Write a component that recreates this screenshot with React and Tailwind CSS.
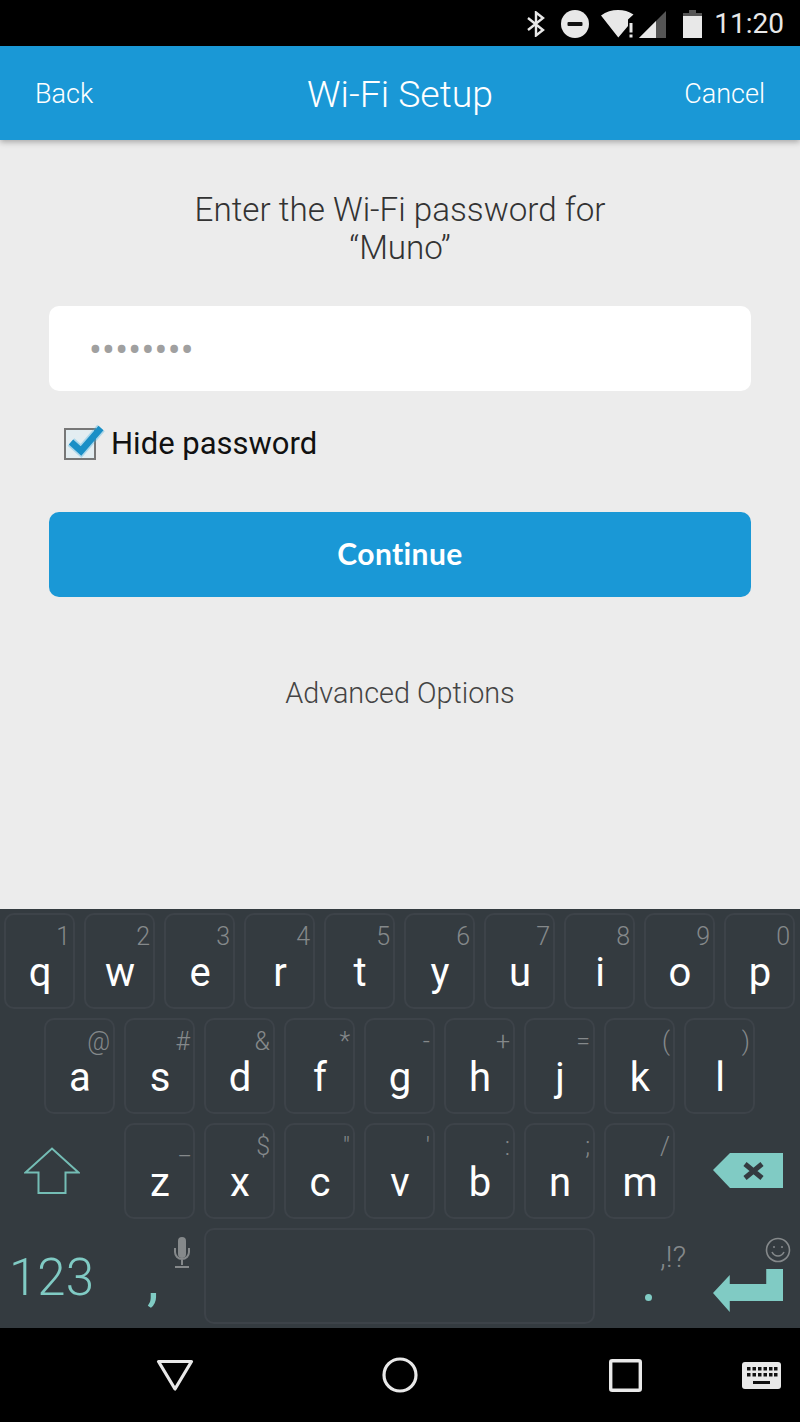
const ROBOTO = "font-['Roboto',sans-serif]";

function Key({ ch, hint }) {
  return (
    <div className="relative flex h-[96px] w-[71px] shrink-0 items-center justify-center rounded-[10px] border-2 border-[#3d4349] pl-[1px] pt-[24px] text-[40px] leading-[48px] text-white">
      {ch}
      <span className="absolute right-[3px] top-[7px] text-[25px] font-light leading-[30px] text-[#85898b]">{hint}</span>
    </div>
  );
}

const row1 = [["q","1"],["w","2"],["e","3"],["r","4"],["t","5"],["y","6"],["u","7"],["i","8"],["o","9"],["p","0"]];
const row2 = [["a","@"],["s","#"],["d","&"],["f","*"],["g","-"],["h","+"],["j","="],["k","("],["l",")"]];
const row3 = [["z","_"],["x","$"],["c","\""],["v","'"],["b",":"],["n",";"],["m","/"]];

function StatusBar() {
  return (
    <div className="flex h-[46px] items-center justify-end bg-black pr-[16px] pt-[2px] text-[#e8e8e8]">
      <svg width="20" height="26" viewBox="0 0 20 26" fill="none" stroke="#e8e8e8" strokeWidth="2.4" className="mr-[15px]">
        <path d="M2 7l15 12-7 5.5V1.5l7 5.5L2 19" />
      </svg>
      <svg width="28" height="28" viewBox="0 0 28 28" className="mr-[12px]">
        <circle cx="14" cy="14" r="14" fill="#e8e8e8" />
        <rect x="6.5" y="12" width="15" height="4" rx="1" fill="#111" />
      </svg>
      <svg width="36" height="28" viewBox="0 0 36 28" className="mr-[2px]">
        <path d="M0 5.5C5 1.8 11 0 17 0s10.5 1.4 15.5 4.5L27 9.5V16l-9.7 11.5z" fill="#e8e8e8" />
        <rect x="28.5" y="13" width="3" height="9.5" fill="#e8e8e8" />
        <rect x="28.5" y="24.5" width="3" height="3" fill="#e8e8e8" />
      </svg>
      <svg width="28" height="27" viewBox="0 0 28 27" className="mr-[16px]">
        <path d="M0 27L27 0v27z" fill="#555" />
        <path d="M0 27L17 10v17z" fill="#e8e8e8" />
      </svg>
      <svg width="19" height="28" viewBox="0 0 19 28" className="mr-[12px]">
        <path d="M6 0h7v3h6v25H0V3h6z" fill="#555" />
        <path d="M0 6h19v22H0z" fill="#e8e8e8" />
      </svg>
      <span className={`${ROBOTO} text-[28px] leading-[34px]`}>11:20</span>
    </div>
  );
}

function Header() {
  return (
    <div className="relative z-10 flex h-[94px] items-center justify-between bg-[#1a98d6] px-[35px] pt-[3px] text-white shadow-[0_2px_6px_rgba(0,0,0,0.3)]">
      <span className="w-[100px] text-[27px] font-light">Back</span>
      <span className="text-[37.4px] font-light">Wi-Fi Setup</span>
      <span className="w-[100px] text-right text-[27px] font-light">Cancel</span>
    </div>
  );
}

function Form() {
  return (
    <div className="flex h-[769px] flex-col bg-[#ececec] px-[49px] pt-[51px]">
      <p className="text-center text-[33.2px] font-light leading-[38px] text-[#333]">
        Enter the Wi-Fi password for
        <br />
        “Muno”
      </p>
      <div className="mt-[39px] flex h-[85px] items-center rounded-[10px] bg-white pl-[40px] pt-[2px] text-[38px] leading-[40px] tracking-[0.3px] text-[#a0a0a0]">
        ••••••••
      </div>
      <label className="mt-[33px] flex h-[40px] items-center pl-[15px]">
        <span className="relative h-[32px] w-[32px] border-2 border-[#777] bg-[#e3edf1]">
          <svg width="46" height="40" viewBox="0 0 46 40" className="absolute left-[-2px] top-[-8px]" fill="none">
            <path d="M7 20l10 9L37 6" stroke="#3fb0e0" strokeOpacity="0.35" strokeWidth="10" />
            <path d="M7 20l10 9L37 6" stroke="#1a8fc6" strokeWidth="6.5" />
          </svg>
        </span>
        <span className="ml-[15px] text-[31px] leading-[40px] text-[#111]">Hide password</span>
      </label>
      <button className="mt-[48px] h-[85px] rounded-[10px] bg-[#1a98d6] pb-[2px] font-['Lato',sans-serif] text-[30px] font-bold tracking-[0.4px] text-white">
        Continue
      </button>
      <p className="mt-[76px] text-center text-[28.8px] font-light leading-[40px] text-[#444]">Advanced Options</p>
    </div>
  );
}

function Keyboard() {
  return (
    <div className="flex h-[419px] flex-col gap-[9px] bg-[#343b40] py-[4px]">
      <div className="flex gap-[9px] pl-[4px]">
        {row1.map(([c, h]) => <Key key={c} ch={c} hint={h} />)}
      </div>
      <div className="flex gap-[9px] pl-[44px]">
        {row2.map(([c, h]) => <Key key={c} ch={c} hint={h} />)}
      </div>
      <div className="flex h-[96px] items-center">
        <div className="flex w-[104px] justify-center">
          <svg width="56" height="48" viewBox="0 0 56 48" fill="none" stroke="#74bdb5" strokeWidth="2">
            <path d="M1.5 25.5L28 1.5l26.5 24H41.5v20.5h-27V25.5z" />
          </svg>
        </div>
        <div className="ml-[20px] flex gap-[9px]">
          {row3.map(([c, h]) => <Key key={c} ch={c} hint={h} />)}
        </div>
        <div className="flex flex-1 justify-center pl-[21px]">
          <svg width="70" height="36" viewBox="0 0 70 36">
            <path d="M0 17L17 0h53v35H17z" fill="#80cbc4" />
            <path d="M32 11l17 14M49 11L32 25" stroke="#343b40" strokeWidth="5" />
          </svg>
        </div>
      </div>
      <div className="flex h-[96px]">
        <div className="flex w-[103px] items-center justify-center pt-[4px] text-[51px] font-light leading-[60px] text-[#80cbc4]">123</div>
        <div className="relative w-[101px] shrink-0">
          <span className="absolute left-[44px] top-[21px] text-[60px] font-normal leading-[60px] text-[#80cbc4]">,</span>
          <svg width="18" height="32" viewBox="0 0 18 32" className="absolute left-[70px] top-[9px]">
            <rect x="5" y="0" width="8" height="21" rx="4" fill="#85898b" />
            <path d="M2 11v4a7 7 0 0 0 14 0v-4M9 22v6M2 30h14" fill="none" stroke="#85898b" strokeWidth="2" />
          </svg>
        </div>
        <div className="h-[96px] w-[391px] rounded-[10px] border-2 border-[#3d4349]" />
        <div className="relative flex-1">
          <span className="absolute left-[50px] top-[66px] h-[7px] w-[7px] rounded-full bg-[#80cbc4]" />
          <span className="absolute left-[65px] top-[11px] text-[30px] font-light leading-[36px] text-[#85898b]">,!?</span>
          <svg width="26" height="26" viewBox="0 0 26 26" fill="none" stroke="#85898b" strokeWidth="1.6" className="absolute right-[9px] top-[9px]">
            <circle cx="13" cy="13" r="11.5" />
            <circle cx="9" cy="10" r="1" fill="#85898b" stroke="none" />
            <circle cx="17" cy="10" r="1" fill="#85898b" stroke="none" />
            <path d="M7 15c1.5 3 3.5 4 6 4s4.5-1 6-4" />
          </svg>
          <svg width="70" height="43" viewBox="0 0 71 43" preserveAspectRatio="none" className="absolute right-[17px] top-[41px]">
            <path d="M54 0h17v32H17v11L0 24 17 6v9h37z" fill="#80cbc4" />
          </svg>
        </div>
      </div>
    </div>
  );
}

function NavBar() {
  return (
    <div className="flex h-[94px] items-center bg-black pl-[156px]">
      <svg width="38" height="33" viewBox="0 0 38 33" fill="none" stroke="#e8e8e8" strokeWidth="3.2" strokeLinejoin="round">
        <path d="M2.5 2.5h33L19 30z" />
      </svg>
      <svg width="36" height="36" viewBox="0 0 36 36" fill="none" stroke="#e8e8e8" strokeWidth="3.2" className="ml-[188px]">
        <circle cx="18" cy="18" r="16" />
      </svg>
      <svg width="33" height="33" viewBox="0 0 33 33" fill="none" stroke="#e8e8e8" strokeWidth="3.4" className="ml-[191px]">
        <rect x="1.7" y="1.7" width="29.6" height="29.6" rx="1.5" />
      </svg>
      <svg width="39" height="27" viewBox="0 0 39 27" className="ml-[100px]">
        <rect width="39" height="27" rx="3" fill="#e8e8e8" />
        <g fill="#111">
          {[5, 10.5, 16, 21.5, 27, 32].map((x) => <rect key={x} x={x} y="5" width="3.5" height="3.5" />)}
          {[5, 10.5, 16, 21.5, 27, 32].map((x) => <rect key={x} x={x} y="11" width="3.5" height="3.5" />)}
          <rect x="11" y="19" width="17" height="3" />
        </g>
      </svg>
    </div>
  );
}

export default function App() {
  return (
    <div className={`${ROBOTO} h-[1422px] w-[800px] overflow-hidden`}>
      <StatusBar />
      <Header />
      <Form />
      <Keyboard />
      <NavBar />
    </div>
  );
}
